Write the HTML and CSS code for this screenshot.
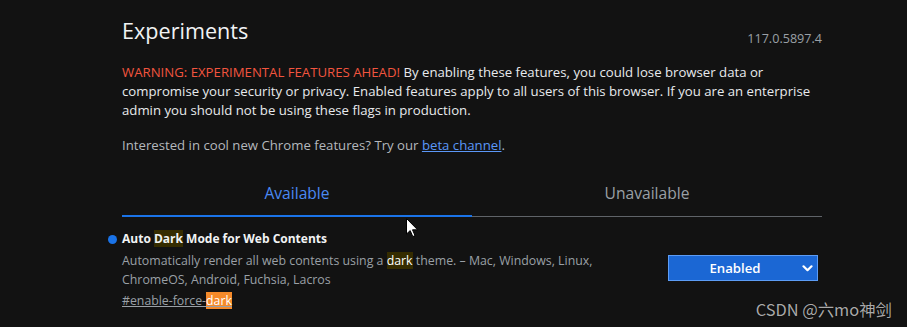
FILE: index.html
```html
<!DOCTYPE html>
<html lang="en">
<head>
<meta charset="utf-8">
<title>Experiments</title>
<link rel="stylesheet" href="styles.css">
</head>
<body>
<main class="page">
  <header class="header">
    <h1 class="title">Experiments</h1>
    <span class="version">117.0.5897.4</span>
  </header>
  <p class="warning"><span class="warning-strong">WARNING: EXPERIMENTAL FEATURES AHEAD!</span> By enabling these features, you could lose browser data or compromise your security or privacy. Enabled features apply to all users of this browser. If you are an enterprise admin you should not be using these flags in production.</p>
  <p class="promo">Interested in cool new Chrome features? Try our <a class="promo-link" href="#">beta channel</a>.</p>
  <nav class="tabs">
    <div class="tab tab-active">Available</div>
    <div class="tab">Unavailable</div>
  </nav>
  <section class="experiment">
    <div class="experiment-text">
      <h2 class="experiment-name">Auto <mark class="hl">Dark</mark> Mode for Web Contents</h2>
      <p class="experiment-desc">Automatically render all web contents using a <mark class="hl hl-strong">dark</mark> theme. – Mac, Windows, Linux, ChromeOS, Android, Fuchsia, Lacros</p>
      <a class="experiment-link" href="#">#enable-force-<mark class="hl-link">dark</mark></a>
    </div>
    <div class="select-wrap">
      <select class="select">
        <option>Default</option>
        <option selected>Enabled</option>
        <option>Disabled</option>
      </select>
      <svg class="chevron" width="11" height="7" viewBox="0 0 11 7"><path d="M1.5 1.3 L5.5 5.2 L9.5 1.3" fill="none" stroke="#fff" stroke-width="2.2" stroke-linecap="round" stroke-linejoin="round"/></svg>
    </div>
  </section>
</main>
<svg class="cursor" width="13" height="20" viewBox="0 0 13 20"><path d="M0.5 0.5 L0.5 16 L4.2 12.6 L6.8 18.6 L9 17.6 L6.5 11.8 L11.6 11.8 Z" fill="#fff" stroke="#000" stroke-width="1"/></svg>
<div class="watermark">CSDN @六mo神剑</div>
</body>
</html>
```
FILE: styles.css
```css
html, body {
  margin: 0;
  background: #121212;
}
body {
  font-family: "Open Sans", "Liberation Sans", sans-serif;
  font-size: 13.2px;
  line-height: 19px;
  color: #e8eaed;
  height: 327px;
  overflow: hidden;
  position: relative;
}
.page {
  width: 700px;
  margin-left: 122px;
  padding-top: 16px;
}
.header {
  display: flex;
  justify-content: space-between;
  align-items: flex-end;
}
.title {
  margin: 0;
  font-size: 21.6px;
  line-height: 30px;
  font-weight: 400;
  color: #f1f3f4;
}
.version {
  color: #9aa0a6;
  font-size: 12.6px;
  margin-bottom: -2px;
}
.warning {
  margin: 17px 0 0;
  color: #e8eaed;
}
.warning-strong {
  color: #f2553f;
}
.promo {
  margin: 16px 0 0;
  color: #b4b8bd;
}
.promo-link {
  color: #5b97f7;
}
.tabs {
  display: grid;
  grid-template-columns: 1fr 1fr;
  margin-top: 27px;
  align-items: start;
}
.tab {
  text-align: center;
  font-size: 15.6px;
  line-height: 22px;
  color: #9aa0a6;
  padding-bottom: 11.5px;
  border-bottom: 1px solid #5f6368;
}
.tab-active {
  color: #4a89f3;
  padding-bottom: 11px;
  border-bottom: 2px solid #1a73e8;
}
.experiment {
  display: flex;
  justify-content: space-between;
  align-items: flex-start;
  margin-top: 12px;
}
.experiment-text {
  width: 505px;
}
.experiment-name {
  position: relative;
  margin: 0;
  font-size: 12px;
  line-height: 19px;
  font-weight: 700;
  color: #f1f3f4;
}
.experiment-name::before {
  content: "";
  position: absolute;
  left: -14px;
  top: 6px;
  width: 9px;
  height: 9px;
  border-radius: 50%;
  background: #1a73e8;
}
.hl {
  background: #352c00;
  color: inherit;
}
.hl-strong {
  color: #ffffff;
}
.experiment-desc {
  margin: 3px 0 0;
  font-size: 12.35px;
  color: #9aa0a6;
}
.experiment-link {
  display: inline-block;
  margin-top: 2px;
  font-size: 12.3px;
  color: #9aa0a6;
  text-decoration: underline;
}
.hl-link {
  background: #f58a2a;
  color: #fff;
}
.select-wrap {
  position: relative;
  margin-top: 26px;
  margin-right: 4px;
}
.select {
  appearance: none;
  -webkit-appearance: none;
  display: block;
  width: 150px;
  height: 26px;
  margin: 0;
  padding: 0 16px 0 0;
  border: 1px solid #5c9cf5;
  border-radius: 0;
  background: #1b67d4;
  color: #fff;
  font-family: "Open Sans", "Liberation Sans", sans-serif;
  font-size: 13.2px;
  font-weight: 600;
  text-align: center;
  text-align-last: center;
}
.chevron {
  position: absolute;
  right: 5px;
  top: 10px;
  pointer-events: none;
}
.cursor {
  position: absolute;
  left: 406px;
  top: 218px;
}
.watermark {
  position: absolute;
  right: 15px;
  bottom: 8px;
  font-family: "Noto Sans CJK SC", "Noto Sans", sans-serif;
  font-size: 16.4px;
  line-height: 20px;
  color: #a9a9a9;
  text-shadow: 0 0 1px #000;
}
```
